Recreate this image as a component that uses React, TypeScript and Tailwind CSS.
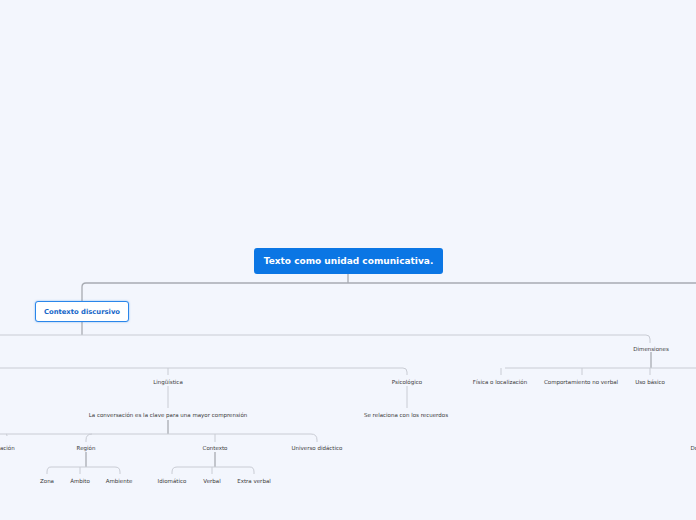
import React from "react";

const labels: [string, number, number][] = [
  ["Dimensiones", 651, 348],
  ["Lingüística", 168, 381],
  ["Psicológico", 407, 381],
  ["Física o localización", 500, 381],
  ["Comportamiento no verbal", 581, 381],
  ["Uso básico", 650, 381],
  ["La conversación es la clave para una mayor comprensión", 168, 414],
  ["Se relaciona con los recuerdos", 406, 414],
  ["Situación", 2, 447],
  ["Región", 86, 447],
  ["Contexto", 215, 447],
  ["Universo didáctico", 317, 447],
  ["Zona", 47, 480],
  ["Ámbito", 80, 480],
  ["Ambiente", 119, 480],
  ["Idiomático", 172, 480],
  ["Verbal", 212, 480],
  ["Extra verbal", 254, 480],
  ["Dominio", 702, 447],
];

export default function App() {
  const thin = { stroke: "#c9ccd4", strokeWidth: 1, fill: "none" };
  const thick = { stroke: "#a8abb2", strokeWidth: 1.3, fill: "none" };
  return (
    <div className="relative w-[696px] h-[520px] overflow-hidden bg-[#f3f6fd]" style={{ fontFamily: '"DejaVu Sans", Verdana, sans-serif' }}>
      <svg className="absolute inset-0" width="696" height="520">
        <path d="M348 274 V283" {...thick} />
        <path d="M700 283 H86 Q82 283 82 287 V301" {...thick} />
        <path d="M82 321 V335" {...thick} />
        <path d="M0 335 H646 Q650 335 650 339 V343" {...thin} />
        <path d="M651 352 V368" {...thick} />
        <path d="M0 368 H403 Q407 368 407 372 V375" {...thin} />
        <path d="M168 368 V375" {...thin} />
        <path d="M168 386 V408" {...thin} />
        <path d="M407 386 V408" {...thin} />
        <path d="M505 368 H700" {...thin} />
        <path d="M501 368 V375 M582 368 V375 M650 368 V375" {...thin} />
        <path d="M168 420 V434" {...thick} />
        <path d="M0 434 H311 Q317 434 317 440 V442" {...thin} />
        <path d="M6 434 Q7 434 7 436 M92 434 Q86 434 86 440 V442 M215 434 V442" {...thin} />
        <path d="M86 452 V467" {...thick} />
        <path d="M51 467 H115 Q120 467 120 472 V474 M51 467 Q47 467 47 472 V474 M80 467 V474" {...thin} />
        <path d="M215 452 V467" {...thick} />
        <path d="M177 467 H250 Q254 467 254 472 V474 M177 467 Q172 467 172 472 V474 M212 467 V474" {...thin} />
      </svg>
      <div className="absolute left-[254px] top-[248px] w-[189px] h-[26px] rounded-[3px] bg-[#0b76e4] text-white font-bold text-[9px] flex items-center justify-center pt-[1px]">
        Texto como unidad comunicativa.
      </div>
      <div className="absolute left-[35px] top-[301px] w-[94px] h-[21px] rounded-[3px] bg-white border border-[#2a86ea] shadow-[0_0_2px_rgba(11,118,228,0.5)] text-[#1466c8] font-bold text-[6.8px] flex items-center justify-center pt-[1px]">
        Contexto discursivo
      </div>
      {labels.map(([t, x, y]) => (
        <div
          key={t}
          className="absolute whitespace-nowrap text-[5.5px] text-[#3a3a3a] -translate-x-1/2 -translate-y-1/2"
          style={{ left: x, top: y + 1 }}
        >
          {t}
        </div>
      ))}
    </div>
  );
}
